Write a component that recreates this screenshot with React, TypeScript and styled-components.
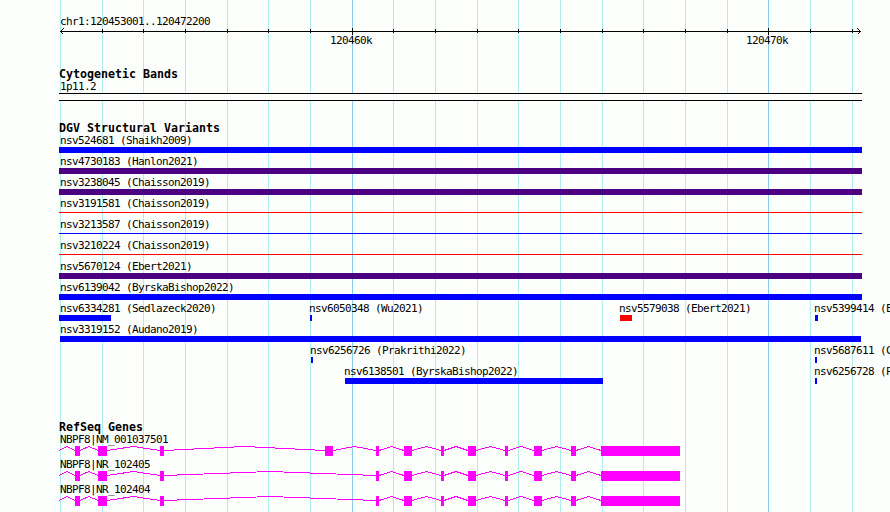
import React from 'react';
import styled, { createGlobalStyle } from 'styled-components';

const Global = createGlobalStyle`
  body { margin: 0; background: #fdfffc; }
`;

const BLUE = '#0000ff';
const PURPLE = '#4b0082';
const RED = '#ff0000';
const MAGENTA = '#ff00ff';

const Viewer = styled.main`
  position: relative;
  width: 890px;
  height: 512px;
  overflow: hidden;
  background: #fdfffc;
  color: #000;
  font: 11px/13px 'DejaVu Sans Mono', 'Liberation Mono', monospace;
  letter-spacing: -0.622px;
  white-space: pre;
`;

const GridLayer = styled.svg`
  position: absolute;
  inset: 0;
`;

const Content = styled.div`
  position: relative;
  display: flex;
  flex-direction: column;
  padding-left: 59px;
`;

const Ruler = styled.header`
  height: 67px;
  padding-top: 14px;
  box-sizing: border-box;
`;

const RulerTitle = styled.div`
  height: 13px;
  line-height: 15px;
  padding-left: 1px;
`;

const RulerAxis = styled.svg`
  display: block;
`;

const RulerLabels = styled.div`
  display: grid;
  grid-template-columns: 416px 60px;
  height: 13px;
  margin-top: -1px;
  padding-left: 271px;
`;

const RulerLabel = styled.span`
  grid-row: 1;
`;

const Section = styled.section<{ $height: number }>`
  height: ${(p) => p.$height}px;
`;

const Heading = styled.h2`
  margin: 0;
  height: 13px;
  font-size: 11.63px;
  line-height: 15px;
  font-weight: bold;
  letter-spacing: 0;
`;

const BandName = styled.div`
  height: 13px;
  padding-left: 1px;
`;

const Band = styled.div`
  width: 803px;
  height: 8px;
  box-sizing: border-box;
  border: solid #000;
  border-width: 1px 0;
  background: #fdfffc;
`;

const Row = styled.div`
  display: flex;
  height: 21px;
`;

const Feature = styled.div<{ $gap: number; $slot: number }>`
  flex: none;
  width: ${(p) => p.$slot}px;
  margin-left: ${(p) => p.$gap}px;
`;

const FeatureName = styled.div<{ $inset: number }>`
  height: 13px;
  margin-left: ${(p) => p.$inset}px;
`;

const FeatureBar = styled.div<{ $width: number; $color: string; $thin: boolean }>`
  width: ${(p) => p.$width}px;
  height: ${(p) => (p.$thin ? 1 : 6)}px;
  margin-top: ${(p) => (p.$thin ? 2 : 0)}px;
  background: ${(p) => p.$color};
`;

const Gene = styled.div`
  height: 25px;
`;

const GeneName = styled.div`
  height: 13px;
  padding-left: 1px;
`;

const GeneModel = styled.svg`
  display: block;
`;

const GRID = [60, 102, 143, 185, 227, 268, 310, 352, 393, 435, 477, 518, 560, 602, 643, 685, 727, 768, 810, 852];
const MAJOR = [352, 768];

interface Item {
  name: string;
  x: number;
  width: number;
  color: string;
  thin?: boolean;
  inset?: number;
}

const full = (name: string, color: string, thin = false): Item[] => [{ name, x: 59, width: 803, color, thin }];

const ROWS: Item[][] = [
  full('nsv524681 (Shaikh2009)', BLUE),
  full('nsv4730183 (Hanlon2021)', PURPLE),
  full('nsv3238045 (Chaisson2019)', PURPLE),
  full('nsv3191581 (Chaisson2019)', RED, true),
  full('nsv3213587 (Chaisson2019)', BLUE, true),
  full('nsv3210224 (Chaisson2019)', RED, true),
  full('nsv5670124 (Ebert2021)', PURPLE),
  full('nsv6139042 (ByrskaBishop2022)', BLUE),
  [
    { name: 'nsv6334281 (Sedlazeck2020)', x: 59, width: 52, color: BLUE },
    { name: 'nsv6050348 (Wu2021)', x: 310, width: 2, color: BLUE, inset: -1 },
    { name: 'nsv5579038 (Ebert2021)', x: 620, width: 12, color: RED, inset: -1 },
    { name: 'nsv5399414 (E', x: 815, width: 3, color: BLUE, inset: -1 },
  ],
  [{ name: 'nsv3319152 (Audano2019)', x: 60, width: 801, color: BLUE, inset: 0 }],
  [
    { name: 'nsv6256726 (Prakrithi2022)', x: 311, width: 2, color: BLUE, inset: -1 },
    { name: 'nsv5687611 (C', x: 815, width: 2, color: BLUE, inset: -1 },
  ],
  [
    { name: 'nsv6138501 (ByrskaBishop2022)', x: 345, width: 258, color: BLUE, inset: -1 },
    { name: 'nsv6256728 (P', x: 815, width: 2, color: BLUE, inset: -1 },
  ],
];

const TAIL_EXONS = [
  [376, 3], [404, 8], [441, 3], [468, 8], [505, 3], [534, 8], [571, 5], [601, 79],
];
const HEAD_EXONS = [[75, 5], [98, 9], [160, 4]];

const GENES = [
  { name: 'NBPF8|NM_001037501', exons: [...HEAD_EXONS, [325, 8], ...TAIL_EXONS] },
  { name: 'NBPF8|NR_102405', exons: [...HEAD_EXONS, ...TAIL_EXONS] },
  { name: 'NBPF8|NR_102404', exons: [...HEAD_EXONS, ...TAIL_EXONS] },
];

/* Each intron rises four pixels to its midpoint and falls back to the baseline. */
const intronPath = (exons: number[][]) => {
  let d = 'M0 4.5L8 0.5L16 4.5';
  for (let i = 0; i < exons.length - 1; i++) {
    const from = exons[i][0] + exons[i][1] - 59;
    const to = exons[i + 1][0] - 59;
    d += `M${from} 4.5L${(from + to) / 2} 0.5L${to} 4.5`;
  }
  return d;
};

const FeatureRow = ({ items }: { items: Item[] }) => (
  <Row>
    {items.map((item, i) => {
      const next = items[i + 1];
      return (
        <Feature key={item.name} $gap={i === 0 ? item.x - 59 : 0} $slot={next ? next.x - item.x : 890 - item.x}>
          <FeatureName $inset={item.inset ?? 1}>{item.name}</FeatureName>
          <FeatureBar $width={item.width} $color={item.color} $thin={!!item.thin} />
        </Feature>
      );
    })}
  </Row>
);

export default function App() {
  return (
    <>
      <Global />
      <Viewer>
        <GridLayer width="890" height="512" shapeRendering="crispEdges">
          {GRID.map((x) => (
            <rect key={x} x={x} y="0" width="1" height="512" fill={MAJOR.includes(x) ? '#87ceeb' : '#afeeee'} />
          ))}
        </GridLayer>
        <Content>
          <Ruler>
            <RulerTitle>chr1:120453001..120472200</RulerTitle>
            <RulerAxis width="803" height="8" shapeRendering="crispEdges">
              <rect x="1" y="4" width="801" height="1" />
              {GRID.slice(1).map((x) =>
                MAJOR.includes(x) ? (
                  <rect key={x} x={x - 59} y="1" width="1" height="7" />
                ) : (
                  <rect key={x} x={x - 59} y="2" width="1" height="4" />
                ),
              )}
              <path d="M4.5 1.5L1.5 4.5L4.5 7.5M798.5 1.5L801.5 4.5L798.5 7.5" fill="none" stroke="#000" />
            </RulerAxis>
            <RulerLabels>
              <RulerLabel>120460k</RulerLabel>
              <RulerLabel>120470k</RulerLabel>
            </RulerLabels>
          </Ruler>
          <Section $height={54}>
            <Heading>Cytogenetic Bands</Heading>
            <BandName>1p11.2</BandName>
            <Band />
          </Section>
          <Section $height={299}>
            <Heading>DGV Structural Variants</Heading>
            {ROWS.map((items) => (
              <FeatureRow key={items[0].name} items={items} />
            ))}
          </Section>
          <Section $height={92}>
            <Heading>RefSeq Genes</Heading>
            {GENES.map((gene) => (
              <Gene key={gene.name}>
                <GeneName>{gene.name}</GeneName>
                <GeneModel width="803" height="10" shapeRendering="crispEdges">
                  <path d={intronPath(gene.exons)} fill="none" stroke={MAGENTA} />
                  {gene.exons.map(([x, w]) => (
                    <rect key={x} x={x - 59} y="0" width={w} height="10" fill={MAGENTA} />
                  ))}
                </GeneModel>
              </Gene>
            ))}
          </Section>
        </Content>
      </Viewer>
    </>
  );
}
